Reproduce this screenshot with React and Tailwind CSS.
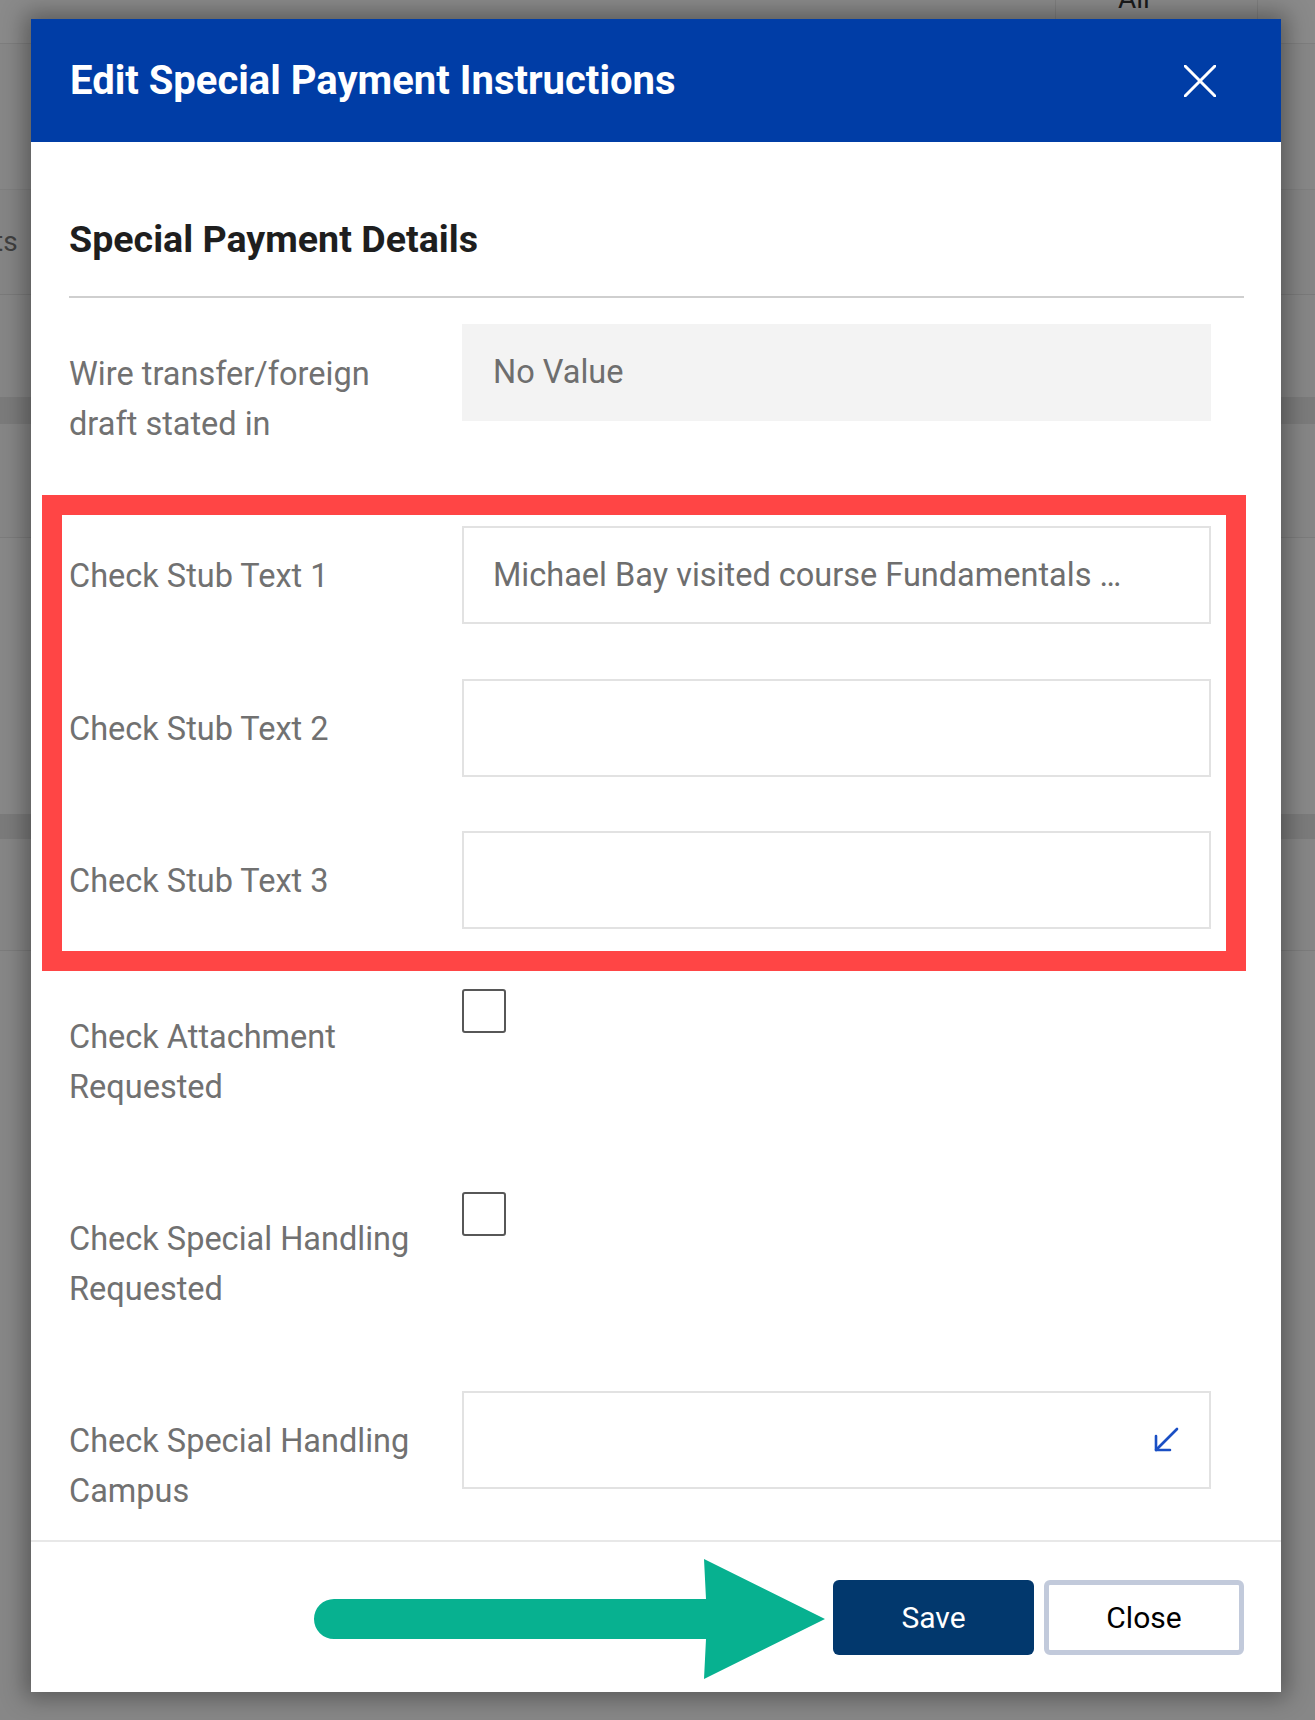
import React from "react";

function Label({ children }) {
  return (
    <div className="w-[393px] shrink-0 pt-[25px] text-[32.5px] leading-[50px] text-[#717171]">
      {children}
    </div>
  );
}

function TextBox({ children, className = "" }) {
  return (
    <div
      className={
        "flex h-[98px] w-[749px] items-center border-2 border-[#e2e2e2] bg-white pl-[29px] text-[32.5px] text-[#6e6e6e] " +
        className
      }
    >
      {children}
    </div>
  );
}

function Checkbox({ className = "" }) {
  return (
    <div
      className={
        "h-[44px] w-[44px] rounded-[3px] border-2 border-[#575757] bg-white " + className
      }
    />
  );
}

export default function App() {
  return (
    <div
      className="relative h-[1720px] w-[1315px] overflow-hidden bg-[#878787]"
      style={{ fontFamily: "Roboto, 'Noto Sans', sans-serif" }}
    >
      {/* dimmed page behind the modal */}
      <div className="flex flex-col">
        <div className="flex h-[44px] border-b border-[#7e7e7e] bg-[#8a8a8a]">
          <div className="w-[1055px]" />
          <div className="relative w-[203px] border-x border-[#7f7f7f]">
            <span className="absolute left-[62px] top-[-22px] text-[28px] text-[#1a1a1a]">
              All
            </span>
          </div>
          <div className="flex-1" />
        </div>
        <div className="h-[145px] bg-[#878787]" />
        <div className="flex h-[105px] items-center border-t border-[#7f7f7f] bg-[#858585]">
          <span className="ml-[-6px] text-[28px] text-[#3f3f3f]">ts</span>
        </div>
        <div className="h-[103px] border-t border-[#7a7a7a] bg-[#868686]" />
        <div className="h-[27px] bg-[#7b7b7b]" />
        <div className="h-[113px] bg-[#868686]" />
        <div className="h-[277px] border-t border-[#7c7c7c] bg-[#888888]" />
        <div className="h-[25px] bg-[#7b7b7b]" />
        <div className="h-[111px] bg-[#868686]" />
        <div className="flex-1 border-t border-[#7c7c7c] bg-[#878787]" />
      </div>

      {/* modal */}
      <div className="absolute left-[31px] top-[19px] flex h-[1673px] w-[1250px] flex-col bg-white shadow-[0_0_22px_6px_rgba(0,0,0,0.35)]">
        <div className="flex h-[123px] shrink-0 items-center justify-between bg-[#003da6] pl-[39px] pr-[65px]">
          <h1 className="text-[40px] font-bold leading-none text-white">
            Edit Special Payment Instructions
          </h1>
          <svg width="32" height="32" viewBox="0 0 32 32" fill="none">
            <path d="M1 1 L31 31 M31 1 L1 31" stroke="white" strokeWidth="3" strokeLinecap="round" />
          </svg>
        </div>

        <div className="flex flex-1 flex-col overflow-hidden pl-[38px] pr-[37px] pt-[78px]">
          <h2 className="text-[37.6px] font-bold leading-[38px] text-[#1e1e1e]">
            Special Payment Details
          </h2>
          <div className="mt-[38px] h-[2px] bg-[#cfcfcf]" />

          <div className="mt-[26px] flex items-start">
            <Label>
              Wire transfer/foreign
              <br />
              draft stated in
            </Label>
            <div className="flex h-[97px] w-[749px] items-center bg-[#f3f3f3] pl-[31px] text-[32.5px] text-[#6e6e6e]">
              No Value
            </div>
          </div>

          <div className="mt-[77px] flex items-start">
            <Label>Check Stub Text 1</Label>
            <TextBox>Michael Bay visited course Fundamentals …</TextBox>
          </div>

          <div className="mt-[55px] flex items-start">
            <Label>Check Stub Text 2</Label>
            <TextBox />
          </div>

          <div className="mt-[54px] flex items-start">
            <Label>Check Stub Text 3</Label>
            <TextBox />
          </div>

          <div className="mt-[58px] flex items-start">
            <Label>
              Check Attachment
              <br />
              Requested
            </Label>
            <Checkbox className="mt-[2px]" />
          </div>

          <div className="mt-[77px] flex items-start">
            <Label>
              Check Special Handling
              <br />
              Requested
            </Label>
            <Checkbox className="mt-[3px]" />
          </div>

          <div className="mt-[77px] flex items-start">
            <Label>
              Check Special Handling
              <br />
              Campus
            </Label>
            <TextBox className="justify-end pr-[30px]">
              <svg width="26" height="26" viewBox="0 0 26 26" fill="none" stroke="#1a4fc4" strokeWidth="2.6" strokeLinecap="round" strokeLinejoin="round">
                <path d="M24 2 L3 23" />
                <path d="M3 9 V23 H17" />
              </svg>
            </TextBox>
          </div>
        </div>

        <div className="flex h-[152px] shrink-0 items-center justify-end gap-[10px] border-t-2 border-[#e8e8e8] pr-[37px]">
          <button className="flex h-[75px] w-[201px] items-center justify-center rounded-[6px] bg-[#02386d] text-[30px] text-white">
            Save
          </button>
          <button className="flex h-[75px] w-[200px] items-center justify-center rounded-[6px] border-[5px] border-[#c2cadb] bg-white text-[30px] text-black">
            Close
          </button>
        </div>
      </div>

      {/* red highlight annotation */}
      <div className="absolute left-[42px] top-[495px] h-[476px] w-[1204px] border-[20px] border-[#ff4545]" />

      {/* green arrow annotation */}
      <svg className="absolute left-[300px] top-[1550px]" width="540" height="140" viewBox="300 1550 540 140">
        <path d="M334 1599 L706 1599 L704 1559 L825 1619 L704 1679 L706 1639 L334 1639 A20 20 0 0 1 334 1599 Z" fill="#07b190" />
      </svg>
    </div>
  );
}
